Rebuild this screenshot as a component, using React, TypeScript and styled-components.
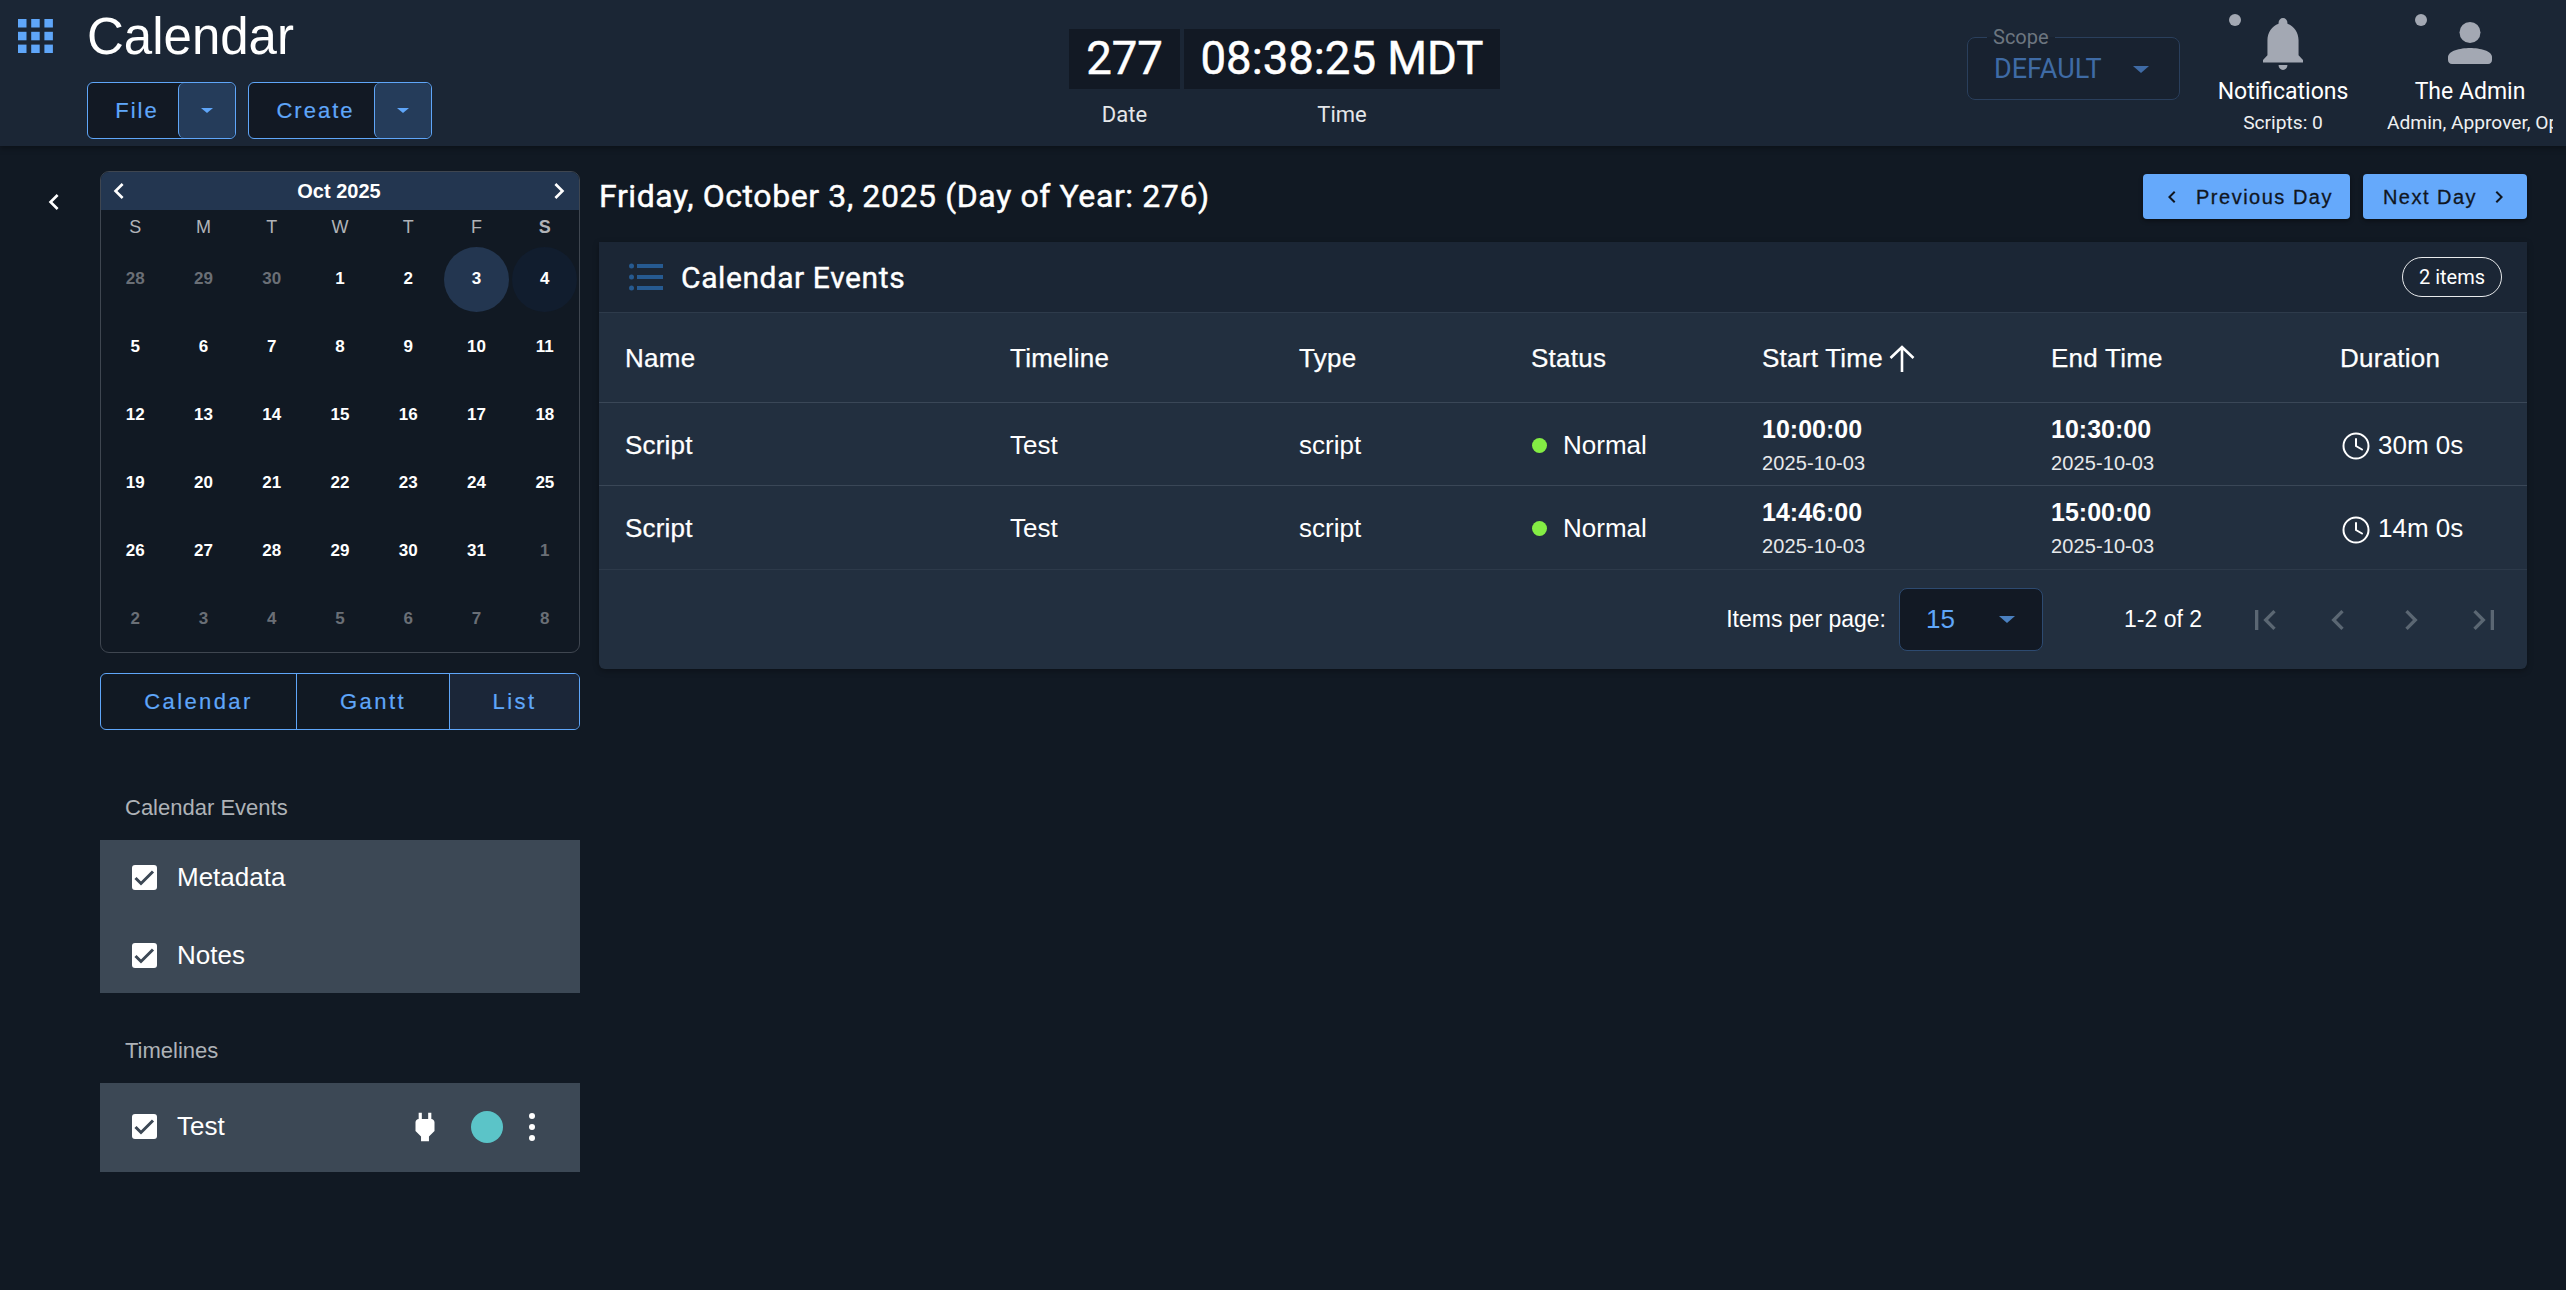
import * as React from 'react';
import styled, { createGlobalStyle } from 'styled-components';

const BLUE = '#5fa6f9';
const PAGE_BG = '#111923';
const HEADER_BG = '#1b2635';
const TABLE_BG = '#222f3f';
const SANS = '"Liberation Sans", Arial, sans-serif';
const ROBOTO = 'Roboto, "Liberation Sans", sans-serif';

const GlobalStyle = createGlobalStyle`
  html, body {
    margin: 0;
    padding: 0;
    background: ${PAGE_BG};
    color: #fff;
    font-family: ${SANS};
  }
  * {
    box-sizing: border-box;
  }
`;

const Page = styled.div`
  width: 2566px;
  height: 1290px;
  overflow: hidden;
  background: ${PAGE_BG};
`;

/* top bar */

const TopBar = styled.header`
  display: grid;
  grid-template-columns: 1069px 431px 1fr;
  height: 146px;
  background: ${HEADER_BG};
  box-shadow: 0 2px 6px rgba(0, 0, 0, 0.35);
`;

const BrandArea = styled.div`
  display: flex;
  padding: 19px 0 0 18px;
`;

const AppsIcon = styled.svg`
  width: 35px;
  height: 34px;
  flex: none;
  fill: ${BLUE};
`;

const BrandColumn = styled.div`
  margin-left: 34px;
  margin-top: -19px;
`;

const AppTitle = styled.h1`
  margin: 0;
  height: 82px;
  padding-top: 8px;
  font-size: 51px;
  line-height: 58px;
  font-weight: 400;
  color: #fff;
`;

const ActionRow = styled.div`
  display: flex;
  gap: 12px;
`;

const SplitButton = styled.div<{ $width: number }>`
  display: flex;
  width: ${(p) => p.$width}px;
  height: 57px;
  border: 1.5px solid ${BLUE};
  border-radius: 6px;
  overflow: hidden;
  background: #121924;
`;

const SplitLabel = styled.div`
  flex: 1;
  display: flex;
  align-items: center;
  justify-content: center;
  padding-left: 8px;
  font-size: 22px;
  letter-spacing: 2px;
  -webkit-text-stroke: 0.2px ${BLUE};
  color: ${BLUE};
`;

const SplitCaret = styled.div`
  width: 57px;
  display: flex;
  align-items: center;
  justify-content: center;
  border-left: 1.5px solid ${BLUE};
  border-radius: 6px;
  background: #253c5a;
`;

const Caret = styled.span<{ $color?: string; $size?: number }>`
  display: block;
  width: 0;
  height: 0;
  border-left: ${(p) => p.$size ?? 6}px solid transparent;
  border-right: ${(p) => p.$size ?? 6}px solid transparent;
  border-top: ${(p) => (p.$size ?? 6) - 0.5}px solid ${(p) => p.$color ?? BLUE};
`;

const ClockArea = styled.div`
  display: flex;
  gap: 4px;
  padding-top: 29px;
  font-family: ${ROBOTO};
`;

const ClockColumn = styled.div<{ $width: number }>`
  width: ${(p) => p.$width}px;
  text-align: center;
`;

const ClockValue = styled.div`
  height: 60px;
  font-size: 45.5px;
  font-weight: 400;
  line-height: 60px;
  -webkit-text-stroke: 0.5px #fff;
  background: #121924;
  color: #fff;
`;

const ClockLabel = styled.div`
  margin-top: 13px;
  font-size: 22px;
  line-height: 26px;
  color: #e4e6e9;
`;

const StatusArea = styled.div`
  display: flex;
  justify-content: flex-end;
  padding-right: 13px;
  font-family: ${ROBOTO};
`;

const ScopeField = styled.fieldset`
  width: 213px;
  height: 70px;
  margin: 30px 33px 0 0;
  padding: 0 0 0 20px;
  border: 1px solid #2a3f5c;
  border-radius: 8px;
  background: #182230;
  display: block;
`;

const ScopeLegend = styled.legend`
  padding: 0 6px;
  margin-left: -1px;
  font-size: 20px;
  line-height: 14px;
  color: #6d7680;
`;

const ScopeValue = styled.div`
  display: flex;
  align-items: center;
  justify-content: space-between;
  padding: 7px 30px 0 6px;
  font-size: 27px;
  line-height: 36px;
  color: #3f6ba5;
`;

const StatusItem = styled.div<{ $width: number; $gap?: number }>`
  position: relative;
  width: ${(p) => p.$width}px;
  margin-right: ${(p) => p.$gap ?? 0}px;
  text-align: center;
  overflow: hidden;
`;

const StatusDot = styled.span<{ $left: number }>`
  position: absolute;
  left: ${(p) => p.$left}px;
  top: 14px;
  width: 12px;
  height: 12px;
  border-radius: 50%;
  background: #a3a8b3;
`;

const StatusIconBox = styled.div<{ $lift: number }>`
  height: 77px;
  display: flex;
  align-items: flex-end;
  justify-content: center;
  padding-bottom: ${(p) => p.$lift}px;
`;

const StatusName = styled.div`
  height: 30px;
  font-size: 23px;
  line-height: 30px;
  color: #fff;
`;

const StatusSub = styled.div`
  margin-top: 2px;
  font-size: 19.2px;
  line-height: 28px;
  white-space: nowrap;
  color: #eef0f2;
`;

/* body */

const Body = styled.div`
  display: flex;
  padding-right: 39px;
`;

const CollapseColumn = styled.div`
  width: 100px;
  flex: none;
  display: flex;
  justify-content: center;
  padding: 40px 0 0 8px;
`;

const Sidebar = styled.aside`
  width: 480px;
  flex: none;
  padding-top: 25px;
`;

const MonthCard = styled.div`
  height: 482px;
  border: 1px solid #3f4650;
  border-radius: 9px;
  overflow: hidden;
`;

const MonthHeader = styled.div`
  display: flex;
  align-items: center;
  justify-content: space-between;
  height: 38px;
  padding: 0 4px 0 2px;
  background: #233650;
  font-size: 20px;
  font-weight: 700;
`;

const MonthGrid = styled.div`
  display: grid;
  grid-template-columns: repeat(7, 1fr);
`;

const WeekDay = styled.div<{ $strong?: boolean }>`
  height: 35px;
  display: flex;
  align-items: center;
  justify-content: center;
  font-size: 18px;
  font-weight: ${(p) => (p.$strong ? 700 : 400)};
  color: #b0b3b8;
`;

const DayCell = styled.div`
  height: 68px;
  display: flex;
  align-items: center;
  justify-content: center;
`;

const DayNumber = styled.div<{ $muted?: boolean; $tone?: string }>`
  width: 65px;
  height: 65px;
  border-radius: 50%;
  display: flex;
  align-items: center;
  justify-content: center;
  font-size: 17px;
  font-weight: 700;
  color: ${(p) => (p.$muted ? '#6a6f76' : '#fff')};
  background: ${(p) => p.$tone ?? 'transparent'};
`;

const ViewToggle = styled.div`
  display: grid;
  grid-template-columns: 195px 153px 1fr;
  height: 57px;
  margin-top: 20px;
  border: 1.5px solid ${BLUE};
  border-radius: 6px;
  overflow: hidden;
`;

const ViewOption = styled.div<{ $active?: boolean }>`
  display: flex;
  align-items: center;
  justify-content: center;
  padding-top: 1px;
  font-size: 22px;
  letter-spacing: 2.4px;
  -webkit-text-stroke: 0.2px ${BLUE};
  color: ${BLUE};
  background: ${(p) => (p.$active ? '#1b2638' : 'transparent')};
  & + & {
    border-left: 1.5px solid ${BLUE};
  }
`;

const FilterLabel = styled.div<{ $top: number }>`
  margin: ${(p) => p.$top}px 0 17px 25px;
  padding-top: 1px;
  font-size: 22px;
  line-height: 30px;
  color: #aeb2b7;
`;

const FilterPanel = styled.div<{ $height: number }>`
  height: ${(p) => p.$height}px;
  display: flex;
  flex-direction: column;
  gap: 4px;
  background: #3c4855;
`;

const FilterRow = styled.div<{ $height: number }>`
  height: ${(p) => p.$height}px;
  display: flex;
  align-items: center;
  padding-left: 32px;
`;

const CheckBox = styled.div`
  width: 25px;
  height: 25px;
  flex: none;
  border-radius: 3px;
  background: #fff;
`;

const FilterName = styled.div`
  flex: 1;
  margin-left: 20px;
  font-size: 26px;
  color: #fff;
`;

const TimelineSwatch = styled.div`
  width: 32px;
  height: 32px;
  margin: 0 26px 0 27px;
  border-radius: 50%;
  background: #5bc4c8;
`;

const KebabWrap = styled.div`
  display: flex;
  flex-direction: column;
  gap: 5px;
  margin-right: 45px;
`;

const KebabDot = styled.span`
  width: 6px;
  height: 6px;
  border-radius: 50%;
  background: #fff;
`;

const Main = styled.main`
  flex: 1;
  margin-left: 19px;
  padding-top: 28px;
`;

const DayBar = styled.div`
  display: flex;
  align-items: center;
  justify-content: space-between;
  height: 45px;
  margin-bottom: 23px;
`;

const DayTitle = styled.h2`
  margin: 0 0 1px;
  font-family: ${ROBOTO};
  font-size: 32px;
  font-weight: 400;
  letter-spacing: 0.6px;
  -webkit-text-stroke: 0.45px #fff;
  color: #fff;
`;

const DayActions = styled.div`
  display: flex;
  gap: 13px;
`;

const DayButton = styled.div<{ $width: number; $gap: number; $inset?: number }>`
  width: ${(p) => p.$width}px;
  height: 45px;
  display: flex;
  align-items: center;
  justify-content: center;
  gap: ${(p) => p.$gap}px;
  padding: 1px 0 0 ${(p) => p.$inset ?? 0}px;
  border-radius: 4px;
  background: #65a9fb;
  color: #10161f;
  font-size: 20px;
  letter-spacing: 1.5px;
  -webkit-text-stroke: 0.3px #10161f;
  box-shadow: 0 2px 4px rgba(0, 0, 0, 0.4);
`;

const EventsCard = styled.section`
  border-radius: 0 0 6px 6px;
  overflow: hidden;
  background: ${TABLE_BG};
  box-shadow: 0 2px 6px rgba(0, 0, 0, 0.3);
`;

const EventsHeader = styled.div`
  display: flex;
  align-items: center;
  height: 71px;
  padding: 0 25px 0 30px;
  background: ${HEADER_BG};
  border-bottom: 1px solid #2e3b4b;
`;

const EventsTitle = styled.div`
  flex: 1;
  margin-left: 18px;
  padding-top: 1px;
  font-family: ${ROBOTO};
  font-size: 30px;
  font-weight: 400;
  letter-spacing: 0.6px;
  -webkit-text-stroke: 0.4px #fff;
  color: #fff;
`;

const CountPill = styled.div`
  width: 100px;
  height: 40px;
  display: flex;
  align-items: center;
  justify-content: center;
  border: 1.5px solid #e8eaec;
  border-radius: 20px;
  font-family: ${ROBOTO};
  font-size: 20px;
  color: #fff;
`;

const TableRow = styled.div<{ $height: number; $faint?: boolean }>`
  display: grid;
  grid-template-columns: 386px 289px 232px 231px 289px 289px 212px;
  height: ${(p) => p.$height}px;
  border-bottom: 1px solid ${(p) => (p.$faint ? '#2d3a4a' : '#3a4757')};
`;

const HeadCell = styled.div`
  display: flex;
  align-items: center;
  gap: 6px;
  padding: 2px 0 0 25px;
  font-size: 26px;
  letter-spacing: 0.25px;
  -webkit-text-stroke: 0.25px #fff;
  color: #fff;
  &:first-child {
    padding-left: 26px;
  }
`;

const BodyCell = styled.div`
  display: flex;
  align-items: center;
  padding: 2px 0 0 25px;
  font-size: 26px;
  color: #fff;
`;

const StrongCell = styled(BodyCell)`
  padding-left: 26px;
  letter-spacing: 0.2px;
  -webkit-text-stroke: 0.25px #fff;
`;

const TimeCell = styled.div`
  padding: 11px 0 0 25px;
`;

const TimeValue = styled.div`
  font-size: 25px;
  line-height: 30px;
  font-weight: 700;
  color: #fff;
`;

const TimeDate = styled.div`
  margin-top: 5px;
  font-size: 20px;
  line-height: 28px;
  letter-spacing: 0.1px;
  color: #e6e8ea;
`;

const StatusLight = styled.span`
  width: 15px;
  height: 15px;
  margin: 0 16px 0 1px;
  border-radius: 50%;
  background: #84ed44;
`;

const DurationIcon = styled.svg`
  width: 28px;
  height: 28px;
  margin: 2px 8px 0 2px;
  fill: none;
  stroke: #fff;
  stroke-width: 2;
  stroke-linecap: round;
`;

const TableFooter = styled.div`
  display: flex;
  align-items: center;
  justify-content: flex-end;
  height: 99px;
  padding: 0 7px 0 0;
  font-size: 23px;
  color: #fff;
`;

const PageSizeBox = styled.div`
  width: 144px;
  height: 63px;
  display: flex;
  align-items: center;
  justify-content: space-between;
  margin: 0 81px 0 13px;
  padding: 0 27px 0 26px;
  border: 1px solid #2d4a70;
  border-radius: 8px;
  background: #121924;
  font-size: 26px;
  color: ${BLUE};
`;

const PageRange = styled.div`
  margin-right: 26px;
`;

const PagerButton = styled.div`
  width: 73px;
  display: flex;
  align-items: center;
  justify-content: center;
`;

const MDI = {
  chevronLeft: 'M15.41,16.58L10.83,12L15.41,7.41L14,6L8,12L14,18L15.41,16.58Z',
  chevronRight: 'M8.59,16.58L13.17,12L8.59,7.41L10,6L16,12L10,18L8.59,16.58Z',
  pageFirst: 'M18.41,16.59L13.82,12L18.41,7.41L17,6L11,12L17,18L18.41,16.59M6,6H8V18H6V6Z',
  pageLast: 'M5.59,7.41L10.18,12L5.59,16.59L7,18L13,12L7,6L5.59,7.41M16,6H18V18H16V6Z',
  plug: 'M16,7V3H14V7H10V3H8V7C7,7 6,8 6,9V14.5L9.5,18V21H14.5V18L18,14.5V9C18,8 17,7 16,7Z',
};

const MdiIcon = ({ path, size, color }: { path: string; size: number; color: string }) => (
  <svg width={size} height={size} viewBox="0 0 24 24" fill={color}>
    <path d={path} />
  </svg>
);

const CheckMark = () => (
  <CheckBox>
    <svg width="25" height="25" viewBox="0 0 25 25" fill="none" stroke="#3c4855" strokeWidth="3">
      <path d="M3.500 13l5.500 5.500L21 6.500" />
    </svg>
  </CheckBox>
);

const BellIcon = () => (
  <svg width="40" height="52" viewBox="3 2 18 21" preserveAspectRatio="none" fill="#a3a8b3">
    <path d="M21,19V20H3V19L5,17V11C5,7.9 7.03,5.17 10,4.29C10,4.19 10,4.1 10,4A2,2 0 0,1 12,2A2,2 0 0,1 14,4C14,4.1 14,4.19 14,4.29C16.97,5.17 19,7.9 19,11V17L21,19M14,21A2,2 0 0,1 12,23A2,2 0 0,1 10,21" />
  </svg>
);

const PersonIcon = () => (
  <svg width="44" height="42" viewBox="0 0 44 42" fill="#a3a8b3">
    <circle cx="22" cy="10.500" r="10.500" />
    <path d="M0 38v-3c0-6 12-9 22-9s22 3 22 9v3c0 2-1.500 4-4 4H4c-2.500 0-4-2-4-4z" />
  </svg>
);

const ListIcon = () => (
  <svg width="34" height="28" viewBox="0 0 34 28" fill="#265a91">
    <circle cx="2.500" cy="3" r="2.500" />
    <circle cx="2.500" cy="14" r="2.500" />
    <circle cx="2.500" cy="25" r="2.500" />
    <rect x="8" y="1" width="26" height="4" />
    <rect x="8" y="12" width="26" height="4" />
    <rect x="8" y="23" width="26" height="4" />
  </svg>
);

const SortArrow = () => (
  <svg width="26" height="27" viewBox="0 0 26 27" fill="none" stroke="#fff" strokeWidth="2.600">
    <path d="M13 27V2M1.500 13L13 2l11.500 11" />
  </svg>
);

const ClockGlyph = () => (
  <DurationIcon viewBox="0 0 28 28">
    <circle cx="14" cy="14" r="12.500" />
    <path d="M14 7v7l6 3.500" />
  </DurationIcon>
);

const WEEK_DAYS = ['S', 'M', 'T', 'W', 'T', 'F', 'S'];

const MONTH_DAYS: { day: number; muted?: boolean; tone?: string }[] = [
  { day: 28, muted: true },
  { day: 29, muted: true },
  { day: 30, muted: true },
  { day: 1 },
  { day: 2 },
  { day: 3, tone: '#233650' },
  { day: 4, tone: '#111d2e' },
  ...Array.from({ length: 27 }, (_, i) => ({ day: i + 5 })),
  ...Array.from({ length: 8 }, (_, i) => ({ day: i + 1, muted: true })),
];

const EVENTS = [
  { start: '10:00:00', end: '10:30:00', duration: '30m 0s' },
  { start: '14:46:00', end: '15:00:00', duration: '14m 0s' },
];

const App = () => {
  return (
    <Page>
      <GlobalStyle />
      <TopBar>
        <BrandArea>
          <AppsIcon viewBox="0 0 35 34">
            {[0, 1, 2].flatMap((row) =>
              [0, 1, 2].map((col) => <rect key={`${row}-${col}`} x={col * 13.2} y={row * 12.8} width="8.500" height="8.500" />),
            )}
          </AppsIcon>
          <BrandColumn>
            <AppTitle>Calendar</AppTitle>
            <ActionRow>
              <SplitButton $width={149}>
                <SplitLabel>File</SplitLabel>
                <SplitCaret>
                  <Caret />
                </SplitCaret>
              </SplitButton>
              <SplitButton $width={184}>
                <SplitLabel>Create</SplitLabel>
                <SplitCaret>
                  <Caret />
                </SplitCaret>
              </SplitButton>
            </ActionRow>
          </BrandColumn>
        </BrandArea>
        <ClockArea>
          <ClockColumn $width={111}>
            <ClockValue>277</ClockValue>
            <ClockLabel>Date</ClockLabel>
          </ClockColumn>
          <ClockColumn $width={316}>
            <ClockValue>08:38:25 MDT</ClockValue>
            <ClockLabel>Time</ClockLabel>
          </ClockColumn>
        </ClockArea>
        <StatusArea>
          <ScopeField>
            <ScopeLegend>Scope</ScopeLegend>
            <ScopeValue>
              DEFAULT
              <Caret $color="#3f6ba5" $size={8} />
            </ScopeValue>
          </ScopeField>
          <StatusItem $width={140} $gap={34}>
            <StatusDot $left={16} />
            <StatusIconBox $lift={7}>
              <BellIcon />
            </StatusIconBox>
            <StatusName>Notifications</StatusName>
            <StatusSub>Scripts: 0</StatusSub>
          </StatusItem>
          <StatusItem $width={166}>
            <StatusDot $left={28} />
            <StatusIconBox $lift={13}>
              <PersonIcon />
            </StatusIconBox>
            <StatusName>The Admin</StatusName>
            <StatusSub>Admin, Approver, Operator, Viewer</StatusSub>
          </StatusItem>
        </StatusArea>
      </TopBar>
      <Body>
        <CollapseColumn>
          <MdiIcon path={MDI.chevronLeft} size={32} color="#fff" />
        </CollapseColumn>
        <Sidebar>
          <MonthCard>
            <MonthHeader>
              <MdiIcon path={MDI.chevronLeft} size={32} color="#fff" />
              Oct 2025
              <MdiIcon path={MDI.chevronRight} size={32} color="#fff" />
            </MonthHeader>
            <MonthGrid>
              {WEEK_DAYS.map((name, index) => (
                <WeekDay key={index} $strong={index === 6}>
                  {name}
                </WeekDay>
              ))}
              {MONTH_DAYS.map((cell, index) => (
                <DayCell key={index}>
                  <DayNumber $muted={cell.muted} $tone={cell.tone}>
                    {cell.day}
                  </DayNumber>
                </DayCell>
              ))}
            </MonthGrid>
          </MonthCard>
          <ViewToggle>
            <ViewOption>Calendar</ViewOption>
            <ViewOption>Gantt</ViewOption>
            <ViewOption $active>List</ViewOption>
          </ViewToggle>
          <FilterLabel $top={62}>Calendar Events</FilterLabel>
          <FilterPanel $height={153}>
            <FilterRow $height={74}>
              <CheckMark />
              <FilterName>Metadata</FilterName>
            </FilterRow>
            <FilterRow $height={74}>
              <CheckMark />
              <FilterName>Notes</FilterName>
            </FilterRow>
          </FilterPanel>
          <FilterLabel $top={42}>Timelines</FilterLabel>
          <FilterPanel $height={89}>
            <FilterRow $height={87}>
              <CheckMark />
              <FilterName>Test</FilterName>
              <MdiIcon path={MDI.plug} size={38} color="#fff" />
              <TimelineSwatch />
              <KebabWrap>
                <KebabDot />
                <KebabDot />
                <KebabDot />
              </KebabWrap>
            </FilterRow>
          </FilterPanel>
        </Sidebar>
        <Main>
          <DayBar>
            <DayTitle>Friday, October 3, 2025 (Day of Year: 276)</DayTitle>
            <DayActions>
              <DayButton $width={207} $gap={12}>
                <MdiIcon path={MDI.chevronLeft} size={24} color="#10161f" />
                Previous Day
              </DayButton>
              <DayButton $width={164} $gap={10} $inset={4}>
                Next Day
                <MdiIcon path={MDI.chevronRight} size={24} color="#10161f" />
              </DayButton>
            </DayActions>
          </DayBar>
          <EventsCard>
            <EventsHeader>
              <ListIcon />
              <EventsTitle>Calendar Events</EventsTitle>
              <CountPill>2 items</CountPill>
            </EventsHeader>
            <TableRow $height={90}>
              <HeadCell>Name</HeadCell>
              <HeadCell>Timeline</HeadCell>
              <HeadCell>Type</HeadCell>
              <HeadCell>Status</HeadCell>
              <HeadCell>
                Start Time
                <SortArrow />
              </HeadCell>
              <HeadCell>End Time</HeadCell>
              <HeadCell>Duration</HeadCell>
            </TableRow>
            {EVENTS.map((event, index) => (
              <TableRow key={event.start} $height={index === 0 ? 83 : 84} $faint={index === 1}>
                <StrongCell>Script</StrongCell>
                <BodyCell>Test</BodyCell>
                <BodyCell>script</BodyCell>
                <BodyCell>
                  <StatusLight />
                  Normal
                </BodyCell>
                <TimeCell>
                  <TimeValue>{event.start}</TimeValue>
                  <TimeDate>2025-10-03</TimeDate>
                </TimeCell>
                <TimeCell>
                  <TimeValue>{event.end}</TimeValue>
                  <TimeDate>2025-10-03</TimeDate>
                </TimeCell>
                <BodyCell>
                  <ClockGlyph />
                  {event.duration}
                </BodyCell>
              </TableRow>
            ))}
            <TableFooter>
              <div>Items per page:</div>
              <PageSizeBox>
                15
                <Caret $color="#4a80c0" $size={8} />
              </PageSizeBox>
              <PageRange>1-2 of 2</PageRange>
              <PagerButton>
                <MdiIcon path={MDI.pageFirst} size={40} color="#5b6773" />
              </PagerButton>
              <PagerButton>
                <MdiIcon path={MDI.chevronLeft} size={40} color="#5b6773" />
              </PagerButton>
              <PagerButton>
                <MdiIcon path={MDI.chevronRight} size={40} color="#5b6773" />
              </PagerButton>
              <PagerButton>
                <MdiIcon path={MDI.pageLast} size={40} color="#5b6773" />
              </PagerButton>
            </TableFooter>
          </EventsCard>
        </Main>
      </Body>
    </Page>
  );
};

export default App;
